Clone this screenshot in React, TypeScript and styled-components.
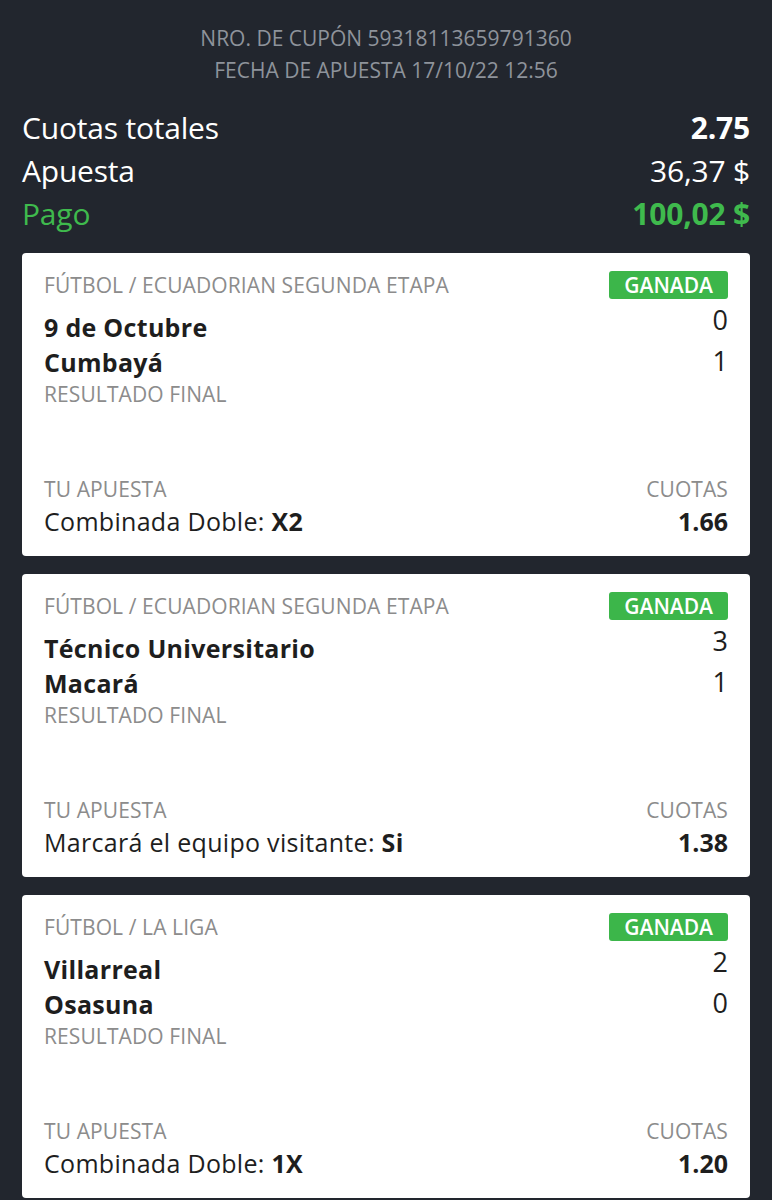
import React from "react";
import styled, { createGlobalStyle } from "styled-components";

const GlobalStyle = createGlobalStyle`
  html, body {
    margin: 0;
    padding: 0;
    background: #22262e;
  }
  * {
    box-sizing: border-box;
  }
`;

const Page = styled.div`
  width: 772px;
  min-height: 1200px;
  background: #22262e;
  font-family: "Open Sans", "Liberation Sans", sans-serif;
  padding: 22px 22px 0;
`;

const CouponHead = styled.div`
  display: flex;
  flex-direction: column;
  align-items: center;
  color: #8e939b;
  font-size: 21px;
  line-height: 32px;
`;

const Summary = styled.div`
  margin-top: 20px;
  display: flex;
  flex-direction: column;
`;

const SummaryRow = styled.div<{ $green?: boolean }>`
  display: flex;
  justify-content: space-between;
  align-items: center;
  height: 43px;
  font-size: 30px;
  letter-spacing: -0.2px;
  color: ${({ $green }) => ($green ? "#3fba4d" : "#ffffff")};
`;

const SummaryValue = styled.span<{ $bold?: boolean }>`
  font-weight: ${({ $bold }) => ($bold ? 700 : 400)};
`;

const Cards = styled.div`
  margin-top: 18px;
  display: flex;
  flex-direction: column;
  gap: 18px;
`;

const Card = styled.div`
  background: #ffffff;
  border-radius: 4px;
  padding: 18px 22px 18px;
  height: 303px;
  display: flex;
  flex-direction: column;
  justify-content: space-between;
`;

const TopRow = styled.div`
  display: flex;
  justify-content: space-between;
  align-items: center;
  height: 28px;
`;

const Category = styled.span`
  color: #8c8c8c;
  font-size: 21px;
  letter-spacing: 0.1px;
`;

const Badge = styled.span`
  background: #3cb64a;
  color: #ffffff;
  font-size: 21px;
  font-weight: 600;
  line-height: 28px;
  padding: 0 15px;
  border-radius: 3px;
`;

const Teams = styled.div`
  margin-top: 11px;
  display: flex;
  flex-direction: column;
`;

const TeamRow = styled.div`
  display: flex;
  justify-content: space-between;
  color: #1e1e1e;
  line-height: 35px;
  height: 35px;
`;

const TeamName = styled.span`
  font-size: 25px;
  font-weight: 700;
  letter-spacing: 0.3px;
`;

const Score = styled.span<{ $shift: number }>`
  font-size: 27px;
  position: relative;
  top: ${({ $shift }) => $shift}px;
`;

const Label = styled.span<{ $right?: boolean }>`
  color: #8c8c8c;
  font-size: 21px;
  line-height: 30px;
  letter-spacing: 0.1px;
  text-align: ${({ $right }) => ($right ? "right" : "left")};
`;

const BetGrid = styled.div`
  display: grid;
  grid-template-columns: 1fr auto;
  align-items: center;
`;

const BetText = styled.span`
  color: #1e1e1e;
  font-size: 25px;
  line-height: 34px;
  letter-spacing: 0.3px;
  b {
    font-weight: 700;
  }
`;

const Odds = styled.span`
  color: #1e1e1e;
  font-size: 25px;
  line-height: 34px;
  font-weight: 700;
  text-align: right;
`;

const Upper = styled.div`
  display: flex;
  flex-direction: column;
`;

const ResultLabel = styled(Label)`
  line-height: 28px;
`;

type Bet = {
  category: string;
  home: string;
  away: string;
  homeScore: number;
  awayScore: number;
  market: string;
  pick: string;
  odds: string;
};

const bets: Bet[] = [
  {
    category: "FÚTBOL / ECUADORIAN SEGUNDA ETAPA",
    home: "9 de Octubre",
    away: "Cumbayá",
    homeScore: 0,
    awayScore: 1,
    market: "Combinada Doble: ",
    pick: "X2",
    odds: "1.66",
  },
  {
    category: "FÚTBOL / ECUADORIAN SEGUNDA ETAPA",
    home: "Técnico Universitario",
    away: "Macará",
    homeScore: 3,
    awayScore: 1,
    market: "Marcará el equipo visitante: ",
    pick: "Si",
    odds: "1.38",
  },
  {
    category: "FÚTBOL / LA LIGA",
    home: "Villarreal",
    away: "Osasuna",
    homeScore: 2,
    awayScore: 0,
    market: "Combinada Doble: ",
    pick: "1X",
    odds: "1.20",
  },
];

const BetCard = ({ bet }: { bet: Bet }) => (
  <Card>
    <Upper>
      <TopRow>
        <Category>{bet.category}</Category>
        <Badge>GANADA</Badge>
      </TopRow>
      <Teams>
        <TeamRow>
          <TeamName>{bet.home}</TeamName>
          <Score $shift={-8}>{bet.homeScore}</Score>
        </TeamRow>
        <TeamRow>
          <TeamName>{bet.away}</TeamName>
          <Score $shift={-2}>{bet.awayScore}</Score>
        </TeamRow>
      </Teams>
      <ResultLabel>RESULTADO FINAL</ResultLabel>
    </Upper>
    <BetGrid>
      <Label>TU APUESTA</Label>
      <Label $right>CUOTAS</Label>
      <BetText>
        {bet.market}
        <b>{bet.pick}</b>
      </BetText>
      <Odds>{bet.odds}</Odds>
    </BetGrid>
  </Card>
);

export default function App() {
  return (
    <Page>
      <GlobalStyle />
      <CouponHead>
        <span>NRO. DE CUPÓN 59318113659791360</span>
        <span>FECHA DE APUESTA 17/10/22 12:56</span>
      </CouponHead>
      <Summary>
        <SummaryRow>
          <span>Cuotas totales</span>
          <SummaryValue $bold>2.75</SummaryValue>
        </SummaryRow>
        <SummaryRow>
          <span>Apuesta</span>
          <SummaryValue>36,37 $</SummaryValue>
        </SummaryRow>
        <SummaryRow $green>
          <span>Pago</span>
          <SummaryValue $bold>100,02 $</SummaryValue>
        </SummaryRow>
      </Summary>
      <Cards>
        {bets.map((b, i) => (
          <BetCard key={i} bet={b} />
        ))}
      </Cards>
    </Page>
  );
}
